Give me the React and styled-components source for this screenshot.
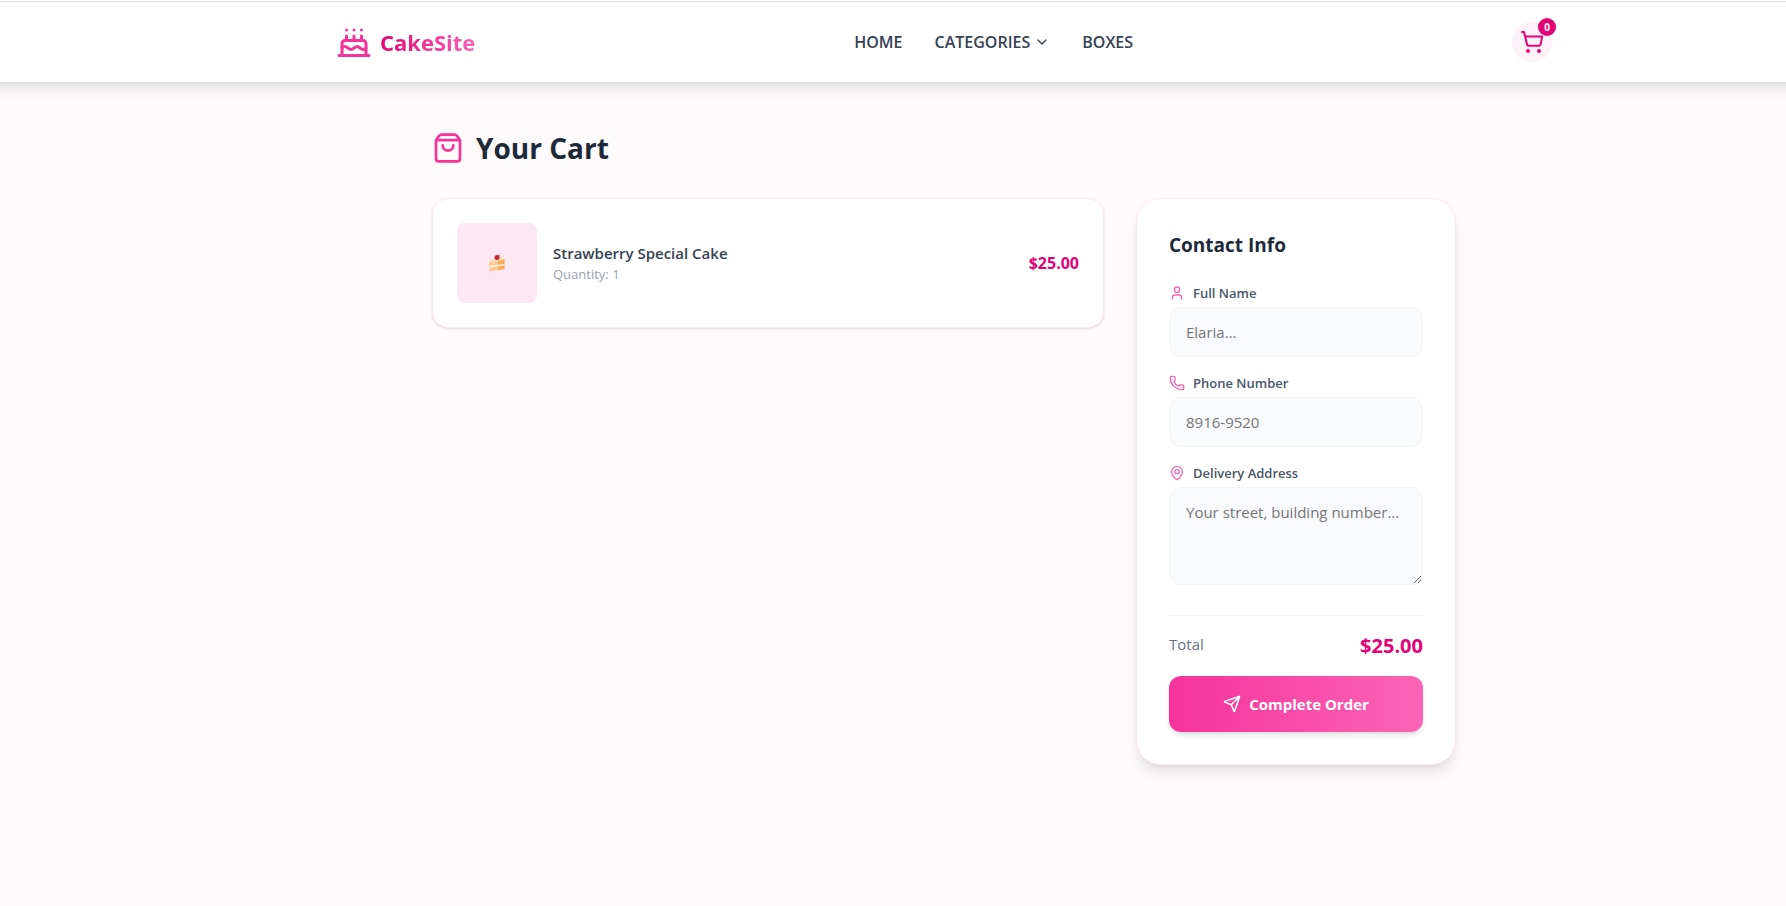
import React, { useState } from "react";
import styled, { createGlobalStyle } from "styled-components";
import {
  Cake,
  ChevronDown,
  MapPin,
  Phone,
  Send,
  ShoppingBag,
  User,
} from "lucide-react";

const items = [
  { id: 1, name: "Strawberry Special Cake", quantity: 1, price: 25 },
];

const CakeSlice = () => (
  <svg width="18" height="18" viewBox="0 0 36 36" aria-hidden="true">
    <path d="M2 14 L18 6 L31 7 L33 10 V30 L3 35 Z" fill="#ffc890" />
    <path d="M20 14 L33 10 V30 L20 32 Z" fill="#ffa85a" />
    <path d="M2 14 L18 6 L31 7 L33 10 L24 13 L3 18 Z" fill="#ffe2bd" />
    <path d="M3 24 L33 20 V23 L3 27 Z" fill="#fff3e2" />
    <circle cx="18" cy="7" r="5" fill="#c9253b" />
    <path d="M20 4 L24 2" stroke="#b5574b" strokeWidth="2" />
  </svg>
);

const CartIcon = () => (
  <svg
    width="24"
    height="24"
    viewBox="0 0 24 24"
    fill="none"
    stroke="currentColor"
    strokeWidth="2"
    strokeLinecap="round"
    strokeLinejoin="round"
    aria-hidden="true"
  >
    <path d="M2 2h2l3 12.2a2 2 0 0 0 2 1.6h9.6a2 2 0 0 0 2-1.5L22.2 6.6H5.2" />
    <circle cx="8" cy="21" r="1" />
    <circle cx="19" cy="21" r="1" />
  </svg>
);

const App = () => {
  const [name, setName] = useState("");
  const [phone, setPhone] = useState("");
  const [address, setAddress] = useState("");

  const total = items.reduce((sum, item) => sum + item.price * item.quantity, 0);

  return (
    <Wrapper>
      <GlobalStyle />
      <Header>
        <HeaderInner>
          <Logo href="#home">
            <Cake size={36} />
            <LogoText>CakeSite</LogoText>
          </Logo>
          <Nav>
            <NavLink href="#home">HOME</NavLink>
            <NavButton type="button">
              CATEGORIES <ChevronDown size={16} />
            </NavButton>
            <NavLink href="#boxes">BOXES</NavLink>
          </Nav>
          <CartLink href="#cart" aria-label="Cart">
            <CartIcon />
            <Badge>0</Badge>
          </CartLink>
        </HeaderInner>
      </Header>
      <Main>
        <Title>
          <ShoppingBag size={32} /> Your Cart
        </Title>
        <Columns>
          <ItemList>
            {items.map((item) => (
              <Item key={item.id}>
                <Thumb>
                  <CakeSlice />
                </Thumb>
                <ItemInfo>
                  <ItemName>{item.name}</ItemName>
                  <Quantity>Quantity: {item.quantity}</Quantity>
                </ItemInfo>
                <Price>${item.price.toFixed(2)}</Price>
              </Item>
            ))}
          </ItemList>
          <Form onSubmit={(ev) => ev.preventDefault()}>
            <FormTitle>Contact Info</FormTitle>
            <Field>
              <Label htmlFor="name">
                <User size={16} /> Full Name
              </Label>
              <Input
                id="name"
                type="text"
                placeholder="Elaria..."
                value={name}
                onChange={(ev) => setName(ev.target.value)}
              />
            </Field>
            <Field>
              <Label htmlFor="phone">
                <Phone size={16} /> Phone Number
              </Label>
              <Input
                id="phone"
                type="tel"
                placeholder="8916-9520"
                value={phone}
                onChange={(ev) => setPhone(ev.target.value)}
              />
            </Field>
            <Field>
              <Label htmlFor="address">
                <MapPin size={16} /> Delivery Address
              </Label>
              <TextArea
                id="address"
                rows={3}
                placeholder="Your street, building number..."
                value={address}
                onChange={(ev) => setAddress(ev.target.value)}
              />
            </Field>
            <TotalRow>
              <TotalLabel>Total</TotalLabel>
              <TotalPrice>${total.toFixed(2)}</TotalPrice>
            </TotalRow>
            <Submit type="submit">
              <Send size={18} /> Complete Order
            </Submit>
          </Form>
        </Columns>
      </Main>
    </Wrapper>
  );
};

const GlobalStyle = createGlobalStyle`
  *, *::before, *::after {
    box-sizing: border-box;
  }

  body {
    margin: 0;
    background: #fdfbfc;
    color: #1e2939;
    font-family: "Segoe UI", "Open Sans", "Noto Sans", sans-serif;
    font-size: 15px;
    line-height: 24px;
  }
`;

const Wrapper = styled.div`
  min-height: 100vh;
  overflow-x: clip;
  border-top: 1px solid white;
`;

/* wider than the window so the shadow runs evenly to both edges */
const Header = styled.header`
  margin: 0 -24px;
  padding: 20px 24px 20px 126px;
  background: white;
  border-top: 1px solid #e0e0e0;
  box-shadow: 0 10px 15px -3px rgba(0, 0, 0, 0.1),
    0 4px 6px -4px rgba(0, 0, 0, 0.1);
`;

const HeaderInner = styled.div`
  display: flex;
  align-items: center;
  justify-content: space-between;
  max-width: 1280px;
  margin: 0 auto;
  padding: 0 32px;
`;

const Logo = styled.a`
  display: flex;
  align-items: center;
  gap: 8px;
  color: #f6339a;
  text-decoration: none;
`;

const LogoText = styled.span`
  font-size: 22px;
  line-height: 32px;
  font-weight: 700;
  color: transparent;
  background: linear-gradient(to right, #e60076, #fb64b6);
  background-clip: text;
`;

const Nav = styled.nav`
  display: flex;
  align-items: center;
  gap: 32px;
  font-size: 16px;
`;

const NavLink = styled.a`
  color: #364153;
  font-weight: 600;
  text-decoration: none;
`;

const NavButton = styled.button`
  display: flex;
  align-items: center;
  gap: 4px;
  padding: 0;
  border: none;
  background: none;
  color: #364153;
  font: inherit;
  font-weight: 600;
  cursor: pointer;
`;

const CartLink = styled.a`
  position: relative;
  display: flex;
  padding: 8px;
  border-radius: 50%;
  background: #fdf2f8;
  color: #e60076;
`;

const Badge = styled.span`
  position: absolute;
  top: -4px;
  right: -4px;
  width: 18px;
  height: 18px;
  border-radius: 50%;
  background: #e60076;
  color: white;
  font-size: 10px;
  line-height: 18px;
  font-weight: 700;
  text-align: center;
`;

const Main = styled.main`
  padding: 48px 0 48px 102px;
`;

const Title = styled.h1`
  display: flex;
  align-items: center;
  gap: 12px;
  max-width: 1024px;
  margin: 0 auto 32px;
  font-size: 28px;
  line-height: 36px;
  font-weight: 700;

  svg {
    color: #f6339a;
  }
`;

const Columns = styled.div`
  display: grid;
  grid-template-columns: 2fr 320px;
  align-items: start;
  gap: 32px;
  max-width: 1024px;
  margin: 0 auto;
`;

const ItemList = styled.ul`
  margin: 0;
  padding: 0;
  list-style: none;
`;

const Item = styled.li`
  display: flex;
  align-items: center;
  gap: 16px;
  padding: 24px;
  border: 1px solid #fce7f3;
  border-radius: 16px;
  background: white;
  box-shadow: 0 1px 3px rgba(0, 0, 0, 0.1), 0 1px 2px -1px rgba(0, 0, 0, 0.1);
`;

const Thumb = styled.div`
  display: flex;
  align-items: center;
  justify-content: center;
  width: 80px;
  height: 80px;
  border-radius: 8px;
  background: #fce7f3;
`;

const ItemInfo = styled.div`
  flex: 1;
`;

const ItemName = styled.h3`
  margin: 0;
  font-size: 15px;
  line-height: 22px;
  font-weight: 600;
  color: #364153;
`;

const Quantity = styled.p`
  margin: 0;
  color: #99a1af;
  font-size: 13px;
  line-height: 20px;
`;

const Price = styled.span`
  color: #e60076;
  font-size: 16px;
  font-weight: 700;
`;

const Form = styled.form`
  padding: 32px;
  border: 1px solid #fce7f3;
  border-radius: 24px;
  background: white;
  box-shadow: 0 10px 15px -3px rgba(0, 0, 0, 0.1),
    0 4px 6px -4px rgba(0, 0, 0, 0.1);
`;

const FormTitle = styled.h2`
  margin: 0 0 24px;
  font-size: 19px;
  line-height: 28px;
  font-weight: 700;
`;

const Field = styled.div`
  margin-bottom: 16px;
`;

const Label = styled.label`
  display: flex;
  align-items: center;
  gap: 8px;
  margin-bottom: 4px;
  color: #4a5565;
  font-size: 13px;
  line-height: 20px;
  font-weight: 600;

  svg {
    color: #fb64b6;
  }
`;

const Input = styled.input`
  display: block;
  width: 100%;
  padding: 12px 16px;
  border: 1px solid #f3f4f6;
  border-radius: 12px;
  background: #f9fafb;
  color: inherit;
  font: inherit;

  &::placeholder {
    color: #757575;
  }
`;

const TextArea = styled(Input).attrs({ as: "textarea" })`
  resize: vertical;
`;

const TotalRow = styled.div`
  display: flex;
  justify-content: space-between;
  margin: 30px 0 16px;
  padding-top: 16px;
  border-top: 1px solid #f3f4f6;
`;

const TotalLabel = styled.span`
  color: #6a7282;
`;

const TotalPrice = styled.span`
  color: #e60076;
  font-size: 20px;
  line-height: 28px;
  font-weight: 700;
`;

const Submit = styled.button`
  display: flex;
  align-items: center;
  justify-content: center;
  gap: 8px;
  width: 100%;
  padding: 16px;
  border: none;
  border-radius: 12px;
  background: linear-gradient(to right, #f6339a, #fb64b6);
  box-shadow: 0 4px 6px -1px rgba(0, 0, 0, 0.1),
    0 2px 4px -2px rgba(0, 0, 0, 0.1);
  color: white;
  font: inherit;
  font-weight: 700;
  cursor: pointer;
`;

export default App;
